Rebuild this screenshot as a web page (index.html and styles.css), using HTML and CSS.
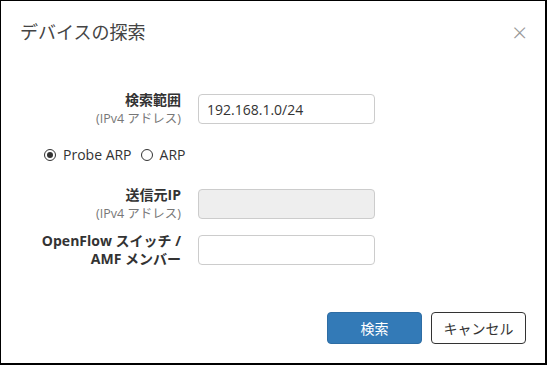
FILE: index.html
```html
<!DOCTYPE html>
<html lang="ja">

<head>
    <meta charset="UTF-8">
    <meta name="viewport" content="width=device-width, initial-scale=1.0">
    <title>デバイスの探索</title>
    <link rel="stylesheet" href="styles.css">
</head>

<body>
    <div class="dialog">
        <div class="header">
            <h4 class="title">デバイスの探索</h4>
            <span class="close">&times;</span>
        </div>

        <div class="form">
            <div class="row first">
                <label class="label">
                    <span class="main">検索範囲</span>
                    <span class="sub">(IPv4 アドレス)</span>
                </label>
                <input class="input" type="text" value="192.168.1.0/24">
            </div>

            <div class="radios">
                <label class="radio"><span class="dot checked"></span>Probe ARP</label>
                <label class="radio"><span class="dot"></span>ARP</label>
            </div>

            <div class="row second">
                <label class="label">
                    <span class="main">送信元IP</span>
                    <span class="sub">(IPv4 アドレス)</span>
                </label>
                <input class="input" type="text" disabled>
            </div>

            <div class="row third">
                <label class="label">
                    <span class="main">OpenFlow スイッチ /</span>
                    <span class="main">AMF メンバー</span>
                </label>
                <input class="input" type="text">
            </div>
        </div>

        <div class="footer">
            <button class="btn primary">検索</button>
            <button class="btn default">キャンセル</button>
        </div>
    </div>
</body>

</html>
```

FILE: styles.css
```css
body {
    margin: 0;
    background-color: #fff;
    font-family: "Open Sans", "Noto Sans CJK JP", sans-serif;
    color: #333;
}

.dialog {
    box-sizing: border-box;
    width: 547px;
    height: 365px;
    border: 1px solid #000;
    border-right-width: 2px;
    border-bottom-width: 2px;
    display: flex;
    flex-direction: column;
}

.header {
    display: flex;
    justify-content: space-between;
    align-items: center;
    height: 24px;
    padding: 19px 18px 0 19px;
}

.title {
    margin: 0;
    font-size: 18px;
    font-weight: normal;
    line-height: 24px;
    color: #444;
}

.close {
    font-size: 26px;
    line-height: 24px;
    color: #999;
    font-weight: 300;
}

.form {
    margin-top: 47px;
}

.row {
    display: grid;
    grid-template-columns: 161px 177px;
    column-gap: 17px;
    padding-left: 19px;
    align-items: start;
}

.label {
    display: flex;
    flex-direction: column;
    align-items: flex-end;
    text-align: right;
}

.main {
    font-size: 14px;
    font-weight: bold;
    line-height: 18px;
    color: #333;
}

.sub {
    font-size: 12.5px;
    line-height: 20px;
    color: #777;
}

.input {
    box-sizing: border-box;
    width: 177px;
    height: 30px;
    margin-top: 3px;
    padding: 0 8px;
    border: 1px solid #ccc;
    border-radius: 4px;
    font-family: "Open Sans", sans-serif;
    font-size: 14px;
    color: #333;
    background: #fff;
}

.input:disabled {
    background: #eee;
}

.radios {
    display: flex;
    align-items: center;
    gap: 9px;
    margin-top: 17px;
    padding-left: 43px;
    height: 17px;
}

.radio {
    display: flex;
    align-items: center;
    gap: 7px;
    font-size: 14px;
    color: #333;
}

.dot {
    box-sizing: border-box;
    width: 12px;
    height: 12px;
    border: 1px solid #333;
    border-radius: 50%;
    position: relative;
}

.dot.checked::after {
    content: "";
    position: absolute;
    left: 2px;
    top: 2px;
    width: 6px;
    height: 6px;
    border-radius: 50%;
    background: #333;
}

.second {
    margin-top: 23px;
}

.third {
    margin-top: 8px;
}

.footer {
    display: flex;
    justify-content: flex-end;
    gap: 9px;
    margin-top: auto;
    padding: 0 19px 19px 0;
}

.btn {
    box-sizing: border-box;
    width: 95px;
    height: 32px;
    border-radius: 4px;
    font-family: "Open Sans", "Noto Sans CJK JP", sans-serif;
    font-size: 14px;
}

.primary {
    background: #337ab7;
    border: 1px solid #2e6da4;
    color: #fff;
}

.default {
    background: #fff;
    border: 1px solid #333;
    color: #333;
}
```
